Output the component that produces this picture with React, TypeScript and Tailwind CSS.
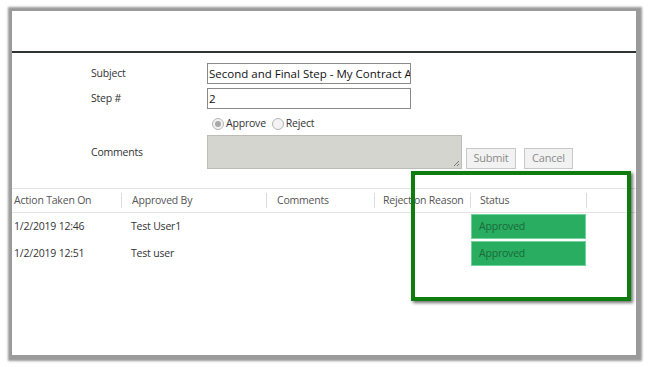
import React from 'react';

type Row = { date: string; by: string; status: string };

const ROWS: Row[] = [
  { date: '1/2/2019 12:46', by: 'Test User1', status: 'Approved' },
  { date: '1/2/2019 12:51', by: 'Test user', status: 'Approved' },
];

const COLS = [
  { label: 'Action Taken On', w: 'w-[109px]', pad: 'pl-[2px]' },
  { label: 'Approved By', w: 'w-[145px]', pad: 'pl-[10px]' },
  { label: 'Comments', w: 'w-[108px]', pad: 'pl-[10px]' },
  { label: 'Rejection Reason', w: 'w-[96px]', pad: 'pl-[8px]' },
  { label: 'Status', w: 'w-[116px]', pad: 'pl-[9px]' },
];

function Radio({ checked, label }: { checked?: boolean; label: string }) {
  return (
    <label className="flex items-center gap-[2px]">
      <span className="flex h-[12px] w-[12px] items-center justify-center rounded-full border border-[#b5b5b5] bg-[#f3f3f3]">
        {checked && <span className="h-[6px] w-[6px] rounded-full bg-[#a8a8a8]" />}
      </span>
      <span>{label}</span>
    </label>
  );
}

export default function App() {
  return (
    <div className="h-[367px] w-[650px] overflow-hidden bg-white pt-[11px] pl-[12px] font-['Open_Sans',sans-serif] text-[10.5px] tracking-[-0.2px] text-[#333]">
      <div className="relative h-[344px] w-[624px] bg-white shadow-[1px_1px_2px_5px_rgba(120,120,120,0.75)]">
        {/* header band */}
        <div className="h-[42px] border-b-2 border-[#2f3333]" />

        {/* form */}
        <div className="flex flex-col pt-[10px] pl-[79px]">
          <div className="flex items-center">
            <div className="w-[116px]">Subject</div>
            <div className="flex h-[21px] w-[204px] items-center overflow-hidden whitespace-nowrap border border-[#8a8a8a] pl-[1px] text-[11.5px] tracking-normal text-[#111]">
              Second and Final Step - My Contract Approval
            </div>
          </div>
          <div className="mt-[4px] flex items-center">
            <div className="w-[116px]">Step #</div>
            <div className="flex h-[21px] w-[204px] items-center border border-[#8a8a8a] pl-[1px] text-[11.5px] text-[#111]">2</div>
          </div>
          <div className="mt-[7px] flex h-[16px] items-center gap-[6px] pl-[121px]">
            <Radio checked label="Approve" />
            <Radio label="Reject" />
          </div>
          <div className="mt-[3px] flex items-center">
            <div className="w-[116px] pt-[1px]">Comments</div>
            <div className="relative h-[34px] w-[255px] border border-[#bdbdb8] bg-[#d5d5cf]">
              <svg className="absolute right-[1px] bottom-[1px]" width="8" height="8" viewBox="0 0 8 8">
                <path d="M7 2L2 7M7 5L5 7" stroke="#777" strokeWidth="1" />
              </svg>
            </div>
            <div className="ml-[4px] flex gap-[8px] self-end">
              <button className="h-[21px] w-[50px] border border-[#c8c8c8] bg-[#f2f2f2] text-[11px] text-[#8a8a8a]">Submit</button>
              <button className="h-[21px] w-[49px] border border-[#c8c8c8] bg-[#f2f2f2] text-[11px] text-[#8a8a8a]">Cancel</button>
            </div>
          </div>
        </div>

        {/* grid */}
        <div className="mt-[19px] border-t border-[#e4e4e4]">
          <div className="flex h-[24px] items-center border-b border-[#e4e4e4] text-[#555]">
            {COLS.map((c, i) => (
              <div key={c.label} className={`${c.w} flex h-full items-center`}>
                {i > 0 && <span className="h-[15px] w-px bg-[#dcdcdc]" />}
                <span className={`${c.pad} whitespace-nowrap`}>{c.label}</span>
              </div>
            ))}
            <span className="h-[15px] w-px bg-[#dcdcdc]" />
          </div>
          {ROWS.map((r) => (
            <div key={r.date} className="flex h-[27px] items-center text-[#333]">
              <div className="w-[109px] pl-[2px]">{r.date}</div>
              <div className="w-[145px] pl-[10px]">{r.by}</div>
              <div className="w-[108px]" />
              <div className="w-[96px]" />
              <div className="flex h-full w-[116px] items-center py-[1px] pl-[1px]">
                <div className="flex h-full w-[115px] items-center border border-[#6fd49a] bg-[#29ad60] pl-[7px] text-[#1a6a3a]">
                  {r.status}
                </div>
              </div>
            </div>
          ))}
        </div>

        {/* highlight */}
        <div className="absolute top-[160px] left-[399px] h-[130px] w-[220px] border-[4px] border-[#0e7c0e] shadow-[2px_2px_3px_rgba(0,0,0,0.55)]" />
      </div>
    </div>
  );
}
